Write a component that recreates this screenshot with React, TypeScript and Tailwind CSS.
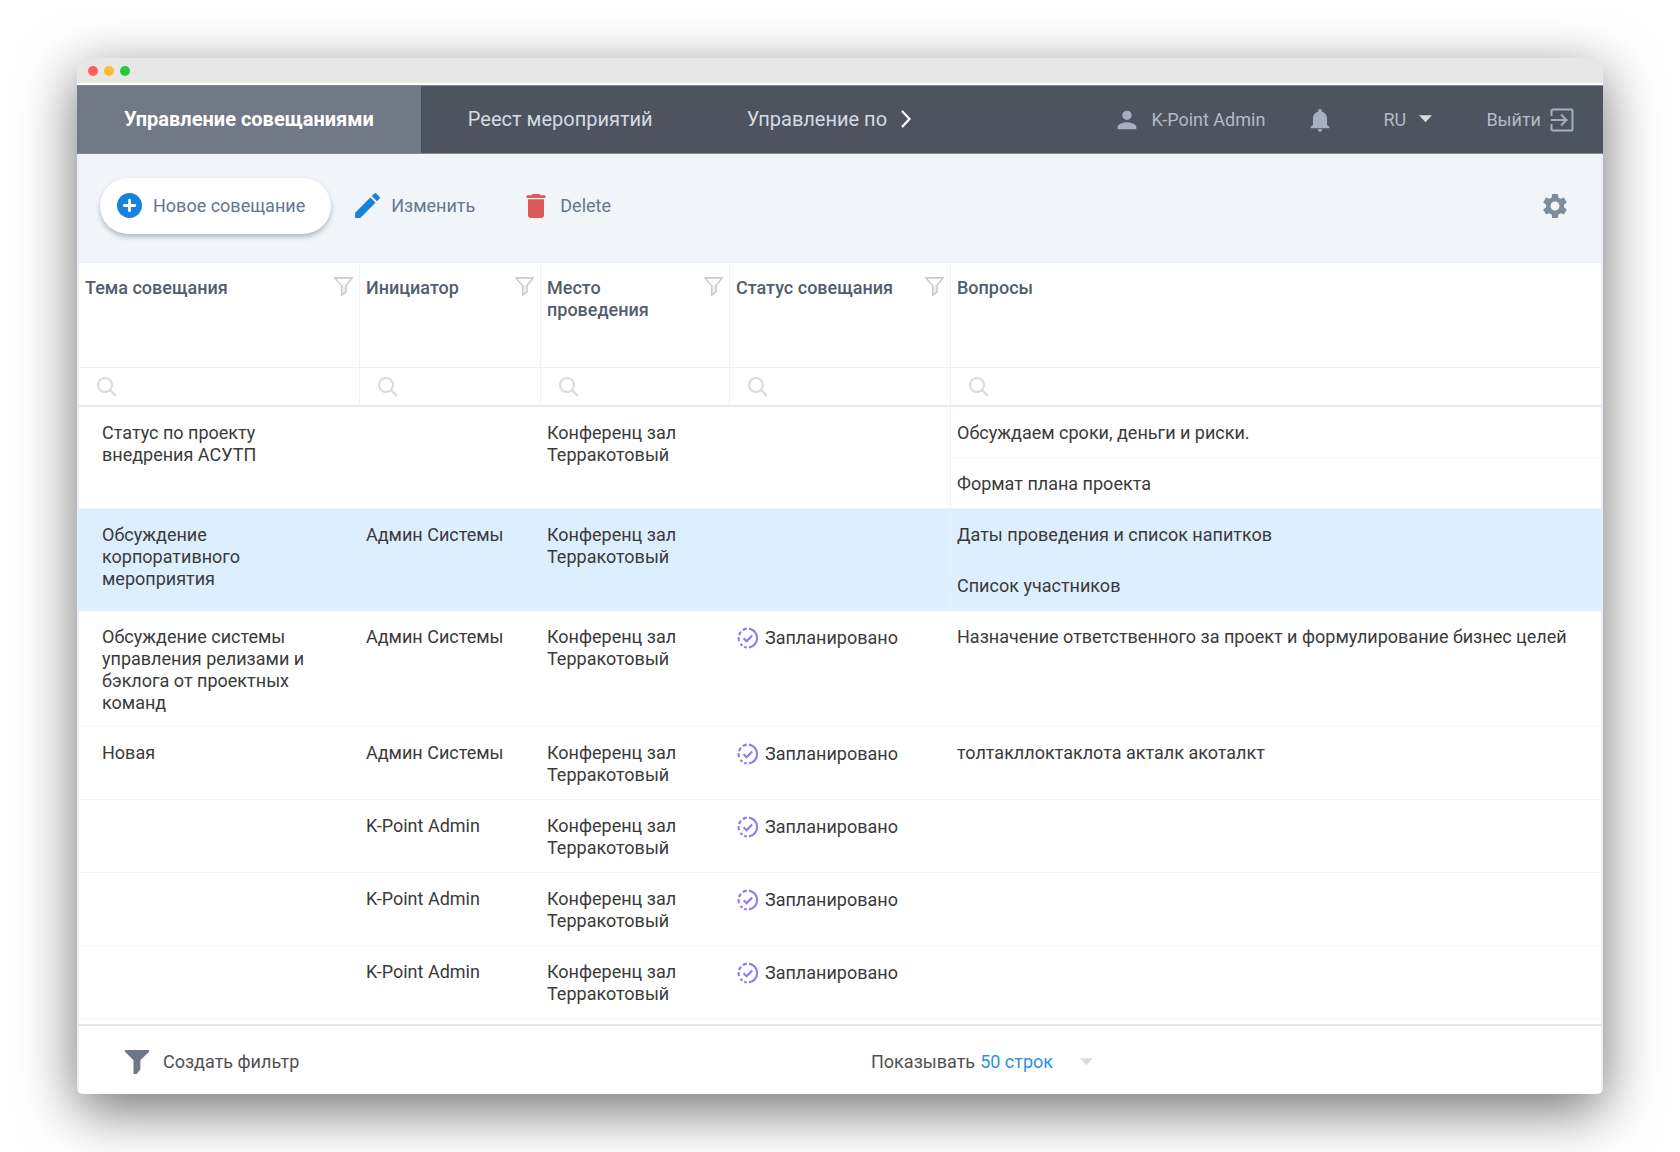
import React from "react";
import { MdDelete, MdEdit, MdNotifications, MdPerson, MdSettings } from "react-icons/md";

type Row = {
  topic?: string;
  initiator?: string;
  place: string;
  planned?: boolean;
  questions: string[];
  selected?: boolean;
};

const PLACE = "Конференц зал Терракотовый";

const rows: Row[] = [
  { topic: "Статус по проекту внедрения АСУТП", place: PLACE, questions: ["Обсуждаем сроки, деньги и риски.", "Формат плана проекта"] },
  { topic: "Обсуждение корпоративного мероприятия", initiator: "Админ Системы", place: PLACE, questions: ["Даты проведения и список напитков", "Список участников"], selected: true },
  { topic: "Обсуждение системы управления релизами и бэклога от проектных команд", initiator: "Админ Системы", place: PLACE, planned: true, questions: ["Назначение ответственного за проект и формулирование бизнес целей"] },
  { topic: "Новая", initiator: "Админ Системы", place: PLACE, planned: true, questions: ["толтакллоктаклота акталк акоталкт"] },
  { initiator: "K-Point Admin", place: PLACE, planned: true, questions: [] },
  { initiator: "K-Point Admin", place: PLACE, planned: true, questions: [] },
  { initiator: "K-Point Admin", place: PLACE, planned: true, questions: [] },
];

const columns = [
  { title: "Тема совещания", filter: true },
  { title: "Инициатор", filter: true },
  { title: "Место проведения", filter: true },
  { title: "Статус совещания", filter: true },
  { title: "Вопросы", filter: false },
];

function PlusIcon() {
  return (
    <svg viewBox="0 0 25 25" className="size-[25px] shrink-0" aria-hidden="true">
      <circle cx="12.5" cy="12.5" r="12.5" fill="#1583dd" />
      <path d="M12.5 7.2v10.6M7.2 12.5h10.6" stroke="#fff" strokeWidth="2.8" strokeLinecap="round" />
    </svg>
  );
}

function ExitIcon() {
  return (
    <svg viewBox="0 0 24 24" className="size-6" fill="none" stroke="currentColor" strokeWidth="2" aria-hidden="true">
      <path d="M1.500 8V3a1.500 1.500 0 0 1 1.500-1.500h18A1.500 1.500 0 0 1 22.500 3v18a1.500 1.500 0 0 1-1.500 1.500H3A1.500 1.500 0 0 1 1.500 21v-5" />
      <path d="M1 12h15M11 6.500l5.500 5.500-5.500 5.500" />
    </svg>
  );
}

function FunnelOutline() {
  return (
    <svg viewBox="0 0 19 19" className="size-[19px]" aria-hidden="true">
      <path d="M1 .9h17l-6 7.600v6.300l-4.300 3.400V8.500z" fill="#f0f0f0" stroke="#cbcbcb" strokeWidth="1.600" />
      <path d="M2.800 1.900h13.400l-5.200 6H8z" fill="#fff" />
    </svg>
  );
}

function FunnelSolid() {
  return (
    <svg viewBox="0 0 24 24" className="size-6" aria-hidden="true">
      <path d="M0 0h24v1.800l-8.600 8.400v9L11.800 24H8.500V10.200L0 1.800z" fill="#6c788a" />
    </svg>
  );
}

function SearchIcon() {
  return (
    <svg viewBox="0 0 20 20" className="size-5 shrink-0" fill="none" stroke="#dbdbdb" strokeWidth="2" aria-hidden="true">
      <circle cx="8" cy="8" r="7" />
      <path d="M13 13l5.800 5.800" strokeWidth="2.400" />
    </svg>
  );
}

function PlannedIcon() {
  return (
    <svg viewBox="0 0 22 22" className="size-[22px] shrink-0" fill="none" stroke="#8b7bf7" strokeWidth="2.100" aria-hidden="true">
      <path d="M12 1.600a9.500 9.500 0 0 1 0 18.800" />
      <path d="M9.800 1.600a9.500 9.500 0 0 0-4 1.500M4 4.700a9.500 9.500 0 0 0-2 3.400M1.600 10.200a9.500 9.500 0 0 0 .5 4M3.500 16.800a9.500 9.500 0 0 0 2 1.900M7.200 19.700a9.500 9.500 0 0 0 2.600.7" />
      <path d="M6.600 11.200l3 3 5.600-5.800" />
    </svg>
  );
}

function Caret({ className }: { className: string }) {
  return (
    <svg viewBox="0 0 14 8" className={className} fill="currentColor" aria-hidden="true">
      <path d="M0 0h14L7 7.500z" />
    </svg>
  );
}

export default function App() {
  return (
    <div className="min-h-screen bg-white px-[77px] py-[58px] font-['Roboto',sans-serif] text-lg leading-[22px] text-[#3a3a3a]">
      <div className="overflow-hidden rounded-md bg-white shadow-[0_16px_56px_rgba(0,0,0,0.56)]">
        <div className="flex h-[25px] items-center gap-[6px] bg-[#e7e7e7] pl-[11px]">
          <span className="size-[10px] rounded-full bg-[#ff5f57]" />
          <span className="size-[10px] rounded-full bg-[#febc2e]" />
          <span className="size-[10px] rounded-full bg-[#28c840]" />
        </div>

        <header className="mt-[2px] flex h-[69px] items-center justify-between border-y border-[#828a97] bg-[#4d545f]">
          <nav className="flex h-full items-center text-xl text-[#d5dae3]">
            <a href="#meetings" className="flex h-full items-center bg-[#727986] px-[47px] pb-[2px] font-bold text-white">Управление совещаниями</a>
            <a href="#events" className="px-[47px] pb-[2px]">Реест мероприятий</a>
            <a href="#assignments" className="ml-[47px] pb-[2px]">Управление по</a>
            <button type="button" aria-label="Следующие вкладки" className="ml-[14px] pb-[2px] text-white">
              <svg viewBox="0 0 10 18" className="h-[18px] w-[10px]" fill="none" stroke="currentColor" strokeWidth="2.200" aria-hidden="true">
                <path d="M1 1l7.500 8L1 17" />
              </svg>
            </button>
          </nav>
          <div className="flex items-center pr-[29px] text-[#b4bac6]">
            <a href="#profile" className="flex items-center gap-[10px]">
              <MdPerson className="size-7 text-[#a6afc2]" />
              K-Point Admin
            </a>
            <button type="button" aria-label="Уведомления" className="ml-[41px]">
              <MdNotifications className="size-7 text-[#a6afc2]" />
            </button>
            <label className="relative ml-[49px] flex items-center">
              <select aria-label="Язык" className="w-[49px] appearance-none bg-transparent outline-none">
                <option>RU</option>
              </select>
              <Caret className="pointer-events-none absolute right-0 bottom-2 h-2 w-[13px] text-[#dcdcdc]" />
            </label>
            <button type="button" className="ml-[54px] flex items-center gap-[9px]">
              Выйти
              <span className="text-[#a6afc2]"><ExitIcon /></span>
            </button>
          </div>
        </header>

        <div className="border-x-2 border-[#e9eff6]">
          <div className="flex h-[108px] items-center bg-[#f1f5fa] pr-[31px] pb-[5px] pl-[21px] text-[#66758c]">
            <button type="button" className="flex h-14 items-center gap-[11px] rounded-full bg-white pr-[26px] pl-[17px] shadow-[0_3px_5px_rgba(60,75,90,0.35)]">
              <PlusIcon />
              Новое совещание
            </button>
            <button type="button" className="ml-5 flex items-center gap-[7px]">
              <MdEdit className="size-[33px] text-[#1583dd]" />
              Изменить
            </button>
            <button type="button" className="ml-[45px] flex items-center gap-2">
              <MdDelete className="size-8 text-[#da5a5a]" />
              Delete
            </button>
            <button type="button" aria-label="Настройки" className="ml-auto">
              <MdSettings className="size-[30px] text-[#7e8c9c]" />
            </button>
          </div>

          <table className="w-full table-fixed border-separate border-spacing-0 text-left">
            <colgroup>
              <col className="w-[281px]" />
              <col className="w-[181px]" />
              <col className="w-[189px]" />
              <col className="w-[221px]" />
              <col />
            </colgroup>
            <thead>
              <tr>
                {columns.map((c) => (
                  <th key={c.title} scope="col" className="h-[106px] border-t border-r border-b border-[#eff1f6] px-[6px] pt-[14px] align-top font-medium text-[#535d6d] last:border-r-0">
                    <div className="flex items-start justify-between">
                      <span>{c.title}</span>
                      {c.filter && (
                        <button type="button" aria-label={"Фильтр: " + c.title} className="shrink-0">
                          <FunnelOutline />
                        </button>
                      )}
                    </div>
                  </th>
                ))}
              </tr>
              <tr>
                {columns.map((c) => (
                  <td key={c.title} className="h-[39px] border-r border-b-2 border-r-[#eff1f6] border-b-[#e4e9f1] pl-[18px] last:border-r-0">
                    <label className="flex items-center gap-2">
                      <SearchIcon />
                      <input type="text" aria-label={"Поиск: " + c.title} className="h-6 w-full min-w-0 bg-transparent outline-none" />
                    </label>
                  </td>
                ))}
              </tr>
            </thead>
            {rows.map((r, i) => {
              const span = Math.max(1, r.questions.length);
              const cell = r.selected
                ? "border-b border-[#ddeefe] pt-[15px] pb-3 px-[6px] align-top"
                : "border-b border-[#f1f2f6] pt-[15px] pb-3 px-[6px] align-top";
              return (
                <tbody key={i} className={r.selected ? "bg-[#ddeefe]" : "bg-white"}>
                  <tr>
                    <td rowSpan={span} className={cell}>
                      <div className="pr-8 pl-[17px]">{r.topic}</div>
                    </td>
                    <td rowSpan={span} className={cell}>{r.initiator}</td>
                    <td rowSpan={span} className={cell}>{r.place}</td>
                    <td rowSpan={span} className={span > 1 ? cell + " border-r border-r-[#eff1f6]" : cell}>
                      {r.planned && (
                        <div className="flex items-center gap-[6px] pt-px pl-px">
                          <PlannedIcon />
                          Запланировано
                        </div>
                      )}
                    </td>
                    <td className={span > 1 ? cell + " h-[51px]" : cell + " h-[73px]"}>{r.questions[0]}</td>
                  </tr>
                  {r.questions.slice(1).map((q) => (
                    <tr key={q}>
                      <td className={cell + " h-[51px]"}>{q}</td>
                    </tr>
                  ))}
                </tbody>
              );
            })}
          </table>

          <footer className="mt-[5px] flex h-[70px] items-center border-t-2 border-[#e1e7ee] pt-[3px] pl-[46px] text-[#505050]">
            <button type="button" className="flex w-[746px] items-center gap-[14px]">
              <FunnelSolid />
              Создать фильтр
            </button>
            <label className="relative flex items-center gap-[5px]">
              Показывать
              <select className="w-[113px] appearance-none bg-transparent text-[#2f8fdf] outline-none">
                <option>50 строк</option>
              </select>
              <Caret className="pointer-events-none absolute right-0 h-2 w-[13px] text-[#dcdcdc]" />
            </label>
          </footer>
        </div>
      </div>
    </div>
  );
}
